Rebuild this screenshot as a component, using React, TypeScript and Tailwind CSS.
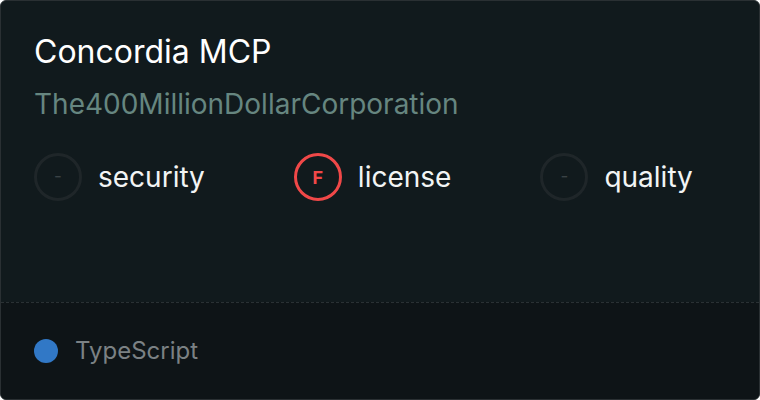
export default function App() {
  const scores = [
    { label: "security", grade: "-", active: false },
    { label: "license", grade: "F", active: true },
    { label: "quality", grade: "-", active: false },
  ];

  return (
    <div className="w-[760px] h-[400px] bg-white font-['Inter',sans-serif]">
      {/* Card */}
      <div className="w-full h-full flex flex-col rounded-md border border-[#2a3033] bg-[#111a1d] overflow-hidden">
        {/* Top - name, owner, scores */}
        <div className="flex-1 px-[33px] pt-[31px]">
          <div className="text-[32px] leading-[40px] text-white">Concordia MCP</div>
          <div className="mt-[14px] text-[28px] leading-[36px] text-[#668680]">The400MillionDollarCorporation</div>

          <div className="mt-[31px] flex items-center gap-[89px]">
            {scores.map((s) => (
              <div key={s.label} className="flex items-center gap-4">
                <div
                  className={
                    s.active
                      ? "w-12 h-12 rounded-full border-[3px] border-[#f04848] flex items-center justify-center text-[18px] font-bold text-[#f04848]"
                      : "w-12 h-12 rounded-full border-[3px] border-[#1f2629] flex items-center justify-center text-[17px] text-[#3a4245]"
                  }
                >
                  {s.grade}
                </div>
                <span className="text-[28px] text-[#f2f4f4]">{s.label}</span>
              </div>
            ))}
          </div>
        </div>

        {/* Bottom - language */}
        <div className="h-[97px] border-t border-dashed border-[#2a3134] bg-[#0e1417] px-[33px] flex items-center">
          <span className="w-6 h-6 rounded-full bg-[#3178c6]" />
          <span className="ml-[17px] text-[24px] text-[#7b8184]">TypeScript</span>
        </div>
      </div>
    </div>
  );
}
